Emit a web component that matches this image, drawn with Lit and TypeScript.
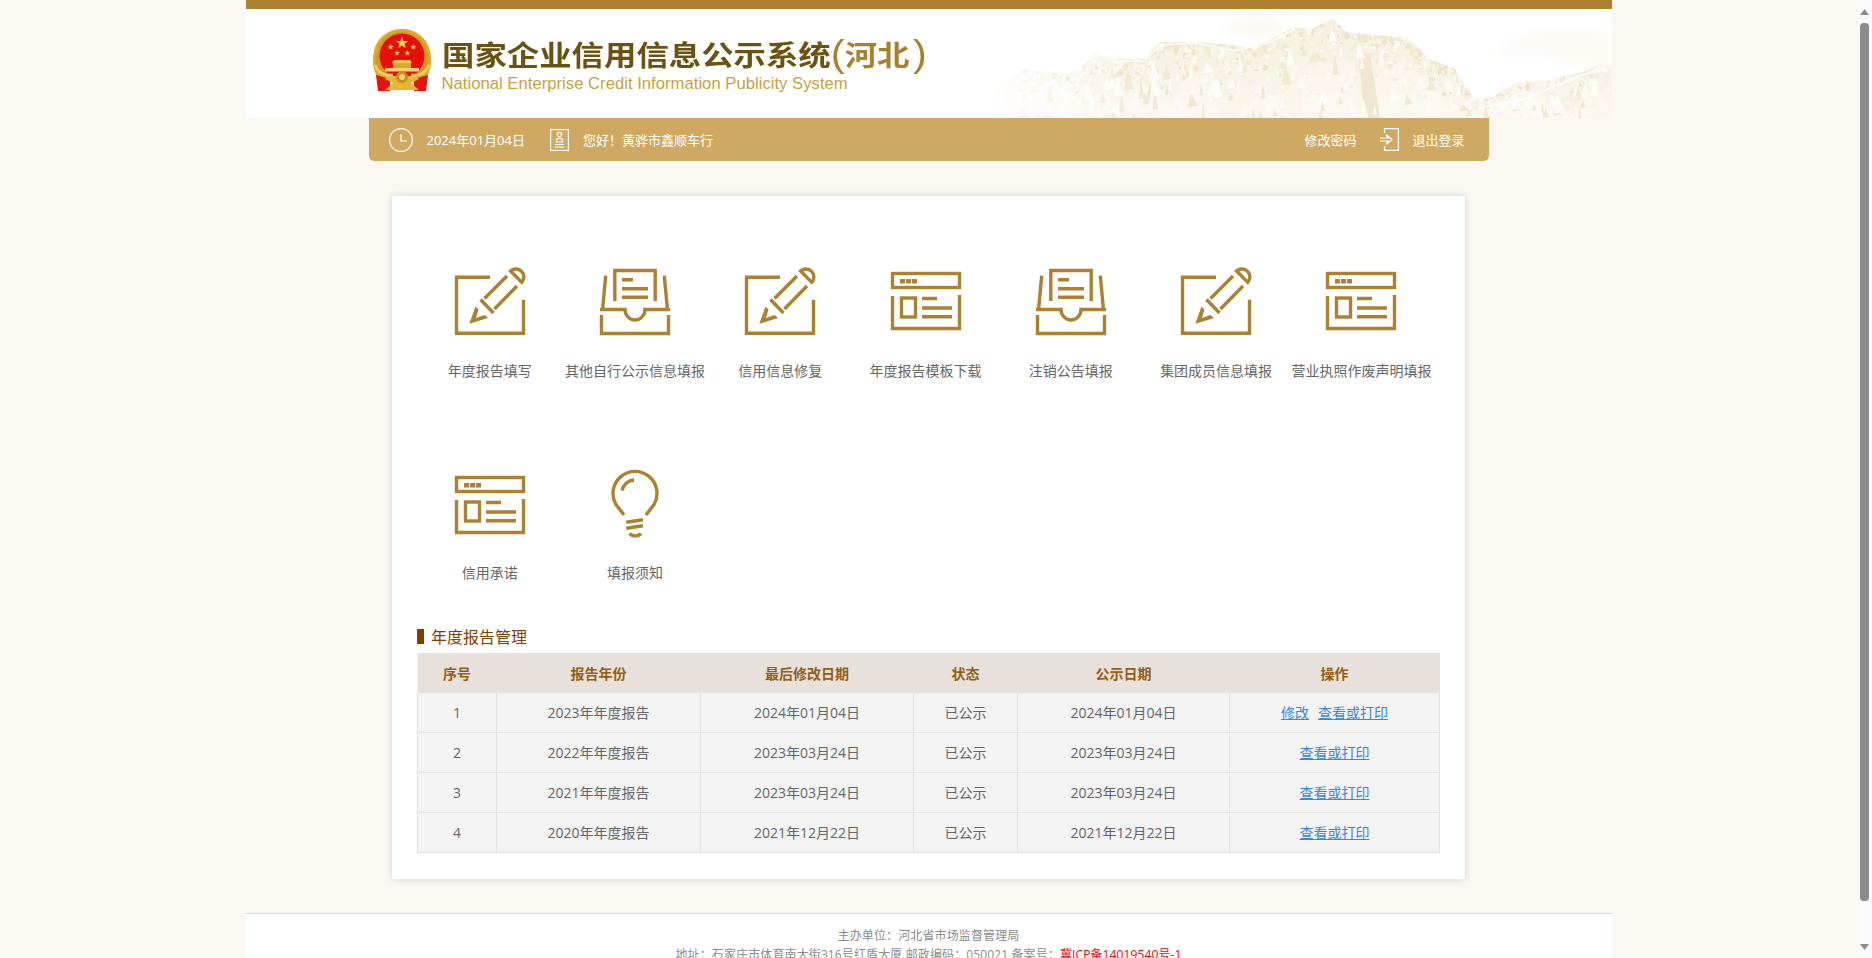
import { LitElement, html, css, svg } from "lit";
import { customElement } from "lit/decorators.js";

const editIcon = svg`
  <path d="M35 9.2H1.5V65.2H68.5V31.7" />
  <path d="M29.5 30.5L52 8M39.5 41L62 18" />
  <path d="M55.6 3L66.8 14.4A8 8 0 0 0 55.6 3Z" />
  <path d="M25.5 31.5L38.5 45" />
  <path class="solid" d="M14.3 55.7L20.5 38.5L23.5 41.5L21 50L29.5 47L33 50Z" />`;

const trayIcon = svg`
  <path d="M14.8 33V2.5H55.2V33" />
  <path d="M22 11.7H33M22 20.7H48M22 29.3H48" />
  <path d="M5.7 7.7L2.7 40M64.3 7.7L67.3 40" />
  <path d="M0 41.5H25A10 10.5 0 0 0 45 41.5H70" />
  <path d="M1.5 47V65.5H68.5V47" />`;

const windowIcon = svg`
  <rect x="1.5" y="5.5" width="67" height="14" />
  <path class="solid" d="M9 11h5v4.5H9zM15 11h5v4.5h-5zM21 11h5v4.5h-5z" />
  <path d="M1.5 28V60.5H68.5V27" />
  <rect x="10.5" y="30" width="14" height="19" />
  <path d="M31 30.5H46M31 40H61M31 48.7H61" />`;

const windowIconLow = svg`<g transform="translate(0 2)">${windowIcon}</g>`;

const bulbIcon = svg`
  <path d="M24 45L16 34.5A22 22 0 1 1 54 34.5L46 45" />
  <path d="M22 20.5A13 13 0 0 1 34 10" />
  <path d="M26.3 52.3L43 49.7M26.3 58.3L43 55.7" />
  <path d="M29.5 63.5A6.5 4.5 0 0 0 41 63.5" />`;

const items: [string, any][] = [
  ["年度报告填写", editIcon],
  ["其他自行公示信息填报", trayIcon],
  ["信用信息修复", editIcon],
  ["年度报告模板下载", windowIcon],
  ["注销公告填报", trayIcon],
  ["集团成员信息填报", editIcon],
  ["营业执照作废声明填报", windowIcon],
  ["信用承诺", windowIconLow],
  ["填报须知", bulbIcon],
];

const rows = [
  ["1", "2023年年度报告", "2024年01月04日", "已公示", "2024年01月04日", true],
  ["2", "2022年年度报告", "2023年03月24日", "已公示", "2023年03月24日", false],
  ["3", "2021年年度报告", "2023年03月24日", "已公示", "2023年03月24日", false],
  ["4", "2020年年度报告", "2021年12月22日", "已公示", "2021年12月22日", false],
];

function star(cx: number, cy: number, r: number) {
  const pts: string[] = [];
  for (let i = 0; i < 10; i++) {
    const rad = i % 2 ? r * 0.4 : r;
    const a = -Math.PI / 2 + (i * Math.PI) / 5;
    pts.push(`${(cx + rad * Math.cos(a)).toFixed(2)},${(cy + rad * Math.sin(a)).toFixed(2)}`);
  }
  return svg`<polygon points=${pts.join(" ")} fill="#f7d44c" />`;
}

const emblem = svg`
  <svg class="emblem" viewBox="0 0 58 62" width="58" height="62">
    <path d="M6 50C-1 42-1 30 1 22C4 8 16 0 29 0C42 0 54 8 57 22C59 30 59 42 52 50Z" fill="#e0a92c" />
    <path d="M7 46C2 38 2 28 4 22C7 10 17 3 29 3C41 3 51 10 54 22C56 28 56 38 51 46Z" fill="#c98d1d" opacity=".55" />
    <circle cx="29" cy="27" r="22.5" fill="#e60f0b" />
    ${star(29, 14, 6.5)}
    ${star(17.7, 18, 3.2)}
    ${star(40.3, 18, 3.2)}
    ${star(24, 24, 3)}
    ${star(34.3, 24, 3)}
    <path d="M21 31H37L39 34H19Z" fill="#f4cc54" />
    <path d="M20 34H38V39H20Z" fill="#dba62f" />
    <path d="M12 39H46V42.5H12Z" fill="#f2d274" />
    <path d="M3 46L17 50V62H5Z" fill="#e5140e" />
    <path d="M55 46L41 50V62H53Z" fill="#e5140e" />
    <path d="M15 47H43L46 50L38 54L46 61H12L20 54L12 50Z" fill="#e8b537" />
    <circle cx="29" cy="48" r="6" fill="#c78f1f" />
    <circle cx="29" cy="48" r="3" fill="#f3d36f" />
    <path d="M2 36C5 44 12 47 20 46M56 36C53 44 46 47 38 46" fill="none" stroke="#f0cb5e" stroke-width="3" />
  </svg>`;

// Deterministic pseudo-random source for the rock texture of the mountain art.
function rng(seed: number) {
  let s = seed;
  return () => {
    s = (s * 16807) % 2147483647;
    return (s - 1) / 2147483646;
  };
}

// Ridge line in the local coordinates of the art (627 x 109, bottom at 109).
const ridge: [number, number][] = [
  [0, 92], [25, 68], [40, 60], [80, 65], [95, 60], [110, 44], [130, 50], [160, 50], [175, 33], [210, 33],
  [240, 35], [270, 40], [285, 30], [310, 18], [325, 20], [348, 10], [362, 23], [400, 27], [420, 28], [430, 36],
  [445, 50], [470, 60], [490, 90], [508, 88], [530, 73], [560, 72], [600, 62], [615, 55], [627, 58], [627, 109], [0, 109],
];

function ridgeY(x: number) {
  for (let i = 0; i < ridge.length - 3; i++) {
    const [x0, y0] = ridge[i];
    const [x1, y1] = ridge[i + 1];
    if (x >= x0 && x <= x1) return y0 + ((y1 - y0) * (x - x0)) / (x1 - x0 || 1);
  }
  return 60;
}

const faces = [
  "0,110 30,85 80,70 100,110",
  "127,110 150,75 170,70 195,110",
  "190,110 195,75 215,65 240,110",
  "250,110 275,85 300,85 295,110",
  "315,110 320,60 365,50 375,110",
  "385,110 395,65 420,50 450,80 490,110",
  "490,110 510,88 555,80 570,110",
  "590,110 610,70 625,100",
];

function mountainArt() {
  const r = rng(20240104);
  const blotches = [];
  for (let i = 0; i < 1100; i++) {
    const x = 4 + r() * 622;
    const top = ridgeY(x);
    const depth = r() * r() * (109 - top);
    const y = top + depth;
    const inCore = x > 130 && x < 470;
    const darkChance = Math.exp(-depth / 22) * (inCore ? 0.8 : 0.2);
    const dark = r() < darkChance;
    const fill = dark ? (r() > 0.5 ? "#efe3c8" : "#f3ead6") : r() > 0.5 ? "#fcf9f2" : "#f7f1e3";
    blotches.push(
      svg`<ellipse cx=${x.toFixed(1)} cy=${y.toFixed(1)} rx=${(0.8 + r() * 2.2).toFixed(1)} ry=${(0.8 + r() * 3).toFixed(1)} fill=${fill} />`
    );
  }
  const facets = [];
  for (let i = 0; i < 170; i++) {
    const x = 20 + r() * 600;
    const top = ridgeY(x);
    const y = top + 8 + r() * (101 - top);
    const w = 2 + r() * 5;
    const h = 5 + r() * 16;
    facets.push(
      svg`<path d="M${x.toFixed(1)} ${y.toFixed(1)}l${w.toFixed(1)} ${h.toFixed(1)}l${(-w * 1.6).toFixed(1)} 1Z" fill=${r() > 0.4 ? "#fdfbf6" : "#f2e9d5"} />`
    );
  }
  const pts = ridge.map((p) => p.join(",")).join(" ");
  return svg`
    <svg class="mountain" viewBox="0 0 627 109" width="627" height="109">
      <defs>
        <linearGradient id="fade" x1="0" x2="0" y1="0" y2="1">
          <stop offset="0" stop-color="#f6efdf" />
          <stop offset="1" stop-color="#fbf7ee" />
        </linearGradient>
        <linearGradient id="edge" x1="0" x2="1" y1="0" y2="0">
          <stop offset="0" stop-color="#fff" stop-opacity="1" />
          <stop offset=".1" stop-color="#fff" stop-opacity=".5" />
          <stop offset=".24" stop-color="#fff" stop-opacity="0" />
        </linearGradient>
        <clipPath id="ridge"><polygon points=${pts} /></clipPath>
        <filter id="soft" x="-5%" y="-5%" width="110%" height="110%"><feGaussianBlur stdDeviation=".7" /></filter>
        <filter id="mist" x="-20%" y="-40%" width="140%" height="180%"><feGaussianBlur stdDeviation="6" /></filter>
      </defs>
      <g filter="url(#mist)">
        <path d="M232 18L275 6L312 18L270 30Z" fill="#fbf8f1" />
        <path d="M505 42L560 20L627 22V60L560 48Z" fill="#fcfaf4" />
      </g>
      <g filter="url(#soft)">
        <g clip-path="url(#ridge)">
          <polygon points=${pts} fill="url(#fade)" />
          ${blotches}
          ${faces.map((f) => svg`<polygon points=${f} fill="#fdfbf5" opacity=".45" />`)}
          <polygon points="373,42 385,45 395,110 380,110" fill="#f1e6cf" />
          ${facets}
        </g>
      </g>
      <path d="M110 46L130 52H160L175 36L210 34L250 42L285 33L310 20" fill="none" stroke="#fcfaf4" stroke-width="2" />
      <path d="M493 99L540 90L565 79L600 65L622 59" fill="none" stroke="#fdfbf7" stroke-width="2" />
      <rect width="627" height="109" fill="url(#edge)" />
    </svg>`;
}

@customElement("app-root")
export class AppRoot extends LitElement {
  static styles = css`
    :host {
      display: flex;
      height: 958px;
      overflow: hidden;
      background: #fbf8f1;
      font-family: "Open Sans", "Noto Sans CJK SC", sans-serif;
      font-size: 14px;
      color: #666;
    }
    .page {
      flex: 1;
      min-width: 0;
      height: 958px;
      overflow: hidden;
      display: flex;
      flex-direction: column;
      align-items: center;
    }
    .head {
      position: relative;
      flex: none;
      width: 1366px;
      height: 118px;
      box-sizing: border-box;
      border-top: 9px solid #ab802e;
      background: #fff;
      display: flex;
      align-items: flex-start;
      padding: 20px 0 0 127px;
      gap: 11px;
    }
    .mountain {
      position: absolute;
      right: 0;
      top: 0;
      display: block;
    }
    .emblem {
      flex: none;
      display: block;
      position: relative;
    }
    .brand {
      position: relative;
      white-space: nowrap;
      padding-top: 7px;
    }
    .title {
      font-family: "Noto Sans CJK SC", sans-serif;
      font-size: 28px;
      line-height: 36px;
      height: 36px;
      font-weight: 700;
      color: #6b5211;
      transform: scaleX(1.157);
      transform-origin: left center;
    }
    .prov {
      color: #a8812f;
    }
    .paren {
      font-family: "Liberation Sans", sans-serif;
      font-weight: 400;
      font-size: 36px;
      line-height: 36px;
    }
    .paren.end {
      margin-left: 3px;
    }
    .sub {
      font-family: "Liberation Sans", sans-serif;
      font-size: 16.7px;
      line-height: 18px;
      margin-top: 3px;
      color: #c9a13f;
    }
    .nav {
      flex: none;
      width: 1120px;
      height: 43px;
      box-sizing: border-box;
      background: #cfa962;
      border-radius: 0 0 5px 5px;
      display: flex;
      align-items: center;
      padding: 0 24px 0 20px;
      color: #fff;
      font-size: 13px;
      white-space: nowrap;
    }
    .nav svg {
      flex: none;
      display: block;
      fill: none;
      stroke: #fff;
      stroke-width: 1.2;
    }
    .date {
      margin-left: 14px;
    }
    .user {
      margin-left: 14px;
    }
    .person {
      margin-left: 25px;
    }
    .spacer {
      flex: 1;
    }
    .logout {
      margin: 0 13px 0 24px;
    }
    .card {
      flex: none;
      width: 1073px;
      box-sizing: border-box;
      margin-top: 35px;
      padding: 72px 25px 26px;
      background: #fff;
      box-shadow: 0 0 7px rgba(0, 0, 0, 0.16);
    }
    .grid {
      display: grid;
      grid-template-columns: repeat(7, 145.3px);
      row-gap: 89px;
    }
    .item {
      display: flex;
      flex-direction: column;
      align-items: center;
      white-space: nowrap;
    }
    .item svg {
      display: block;
      overflow: visible;
      fill: none;
      stroke: #ac812f;
      stroke-width: 3.4;
    }
    .item svg .solid {
      fill: #ac812f;
      stroke: none;
    }
    .label {
      margin-top: 23px;
      line-height: 20px;
      color: #666;
    }
    .section {
      display: flex;
      align-items: center;
      margin-top: 41px;
      height: 24px;
      color: #7f4000;
      font-size: 16px;
    }
    .section::before {
      content: "";
      width: 7px;
      height: 15px;
      margin-right: 7px;
      background: #7f4000;
    }
    table {
      width: 1023px;
      margin-top: 5px;
      border-collapse: collapse;
      table-layout: fixed;
      text-align: center;
      background: #f3f3f3;
    }
    th {
      height: 39px;
      padding: 0;
      background: #e8e1db;
      color: #945d12;
      font-weight: 700;
      font-size: 14px;
    }
    td {
      height: 38px;
      padding: 0 0 1px;
      border: 1px solid #e2e2e2;
      color: #666;
      white-space: nowrap;
    }
    .c1 { width: 79px; }
    .c2 { width: 204px; }
    .c3 { width: 213px; }
    .c4 { width: 104px; }
    .c5 { width: 212px; }
    a {
      color: #3a86d8;
      text-decoration: underline;
    }
    a + a {
      margin-left: 9px;
    }
    .foot {
      flex: none;
      width: 1366px;
      box-sizing: border-box;
      margin-top: 34px;
      padding: 12px 0 10px;
      background: #fff;
      border-top: 1px solid #d8d5cd;
      text-align: center;
      font-size: 12px;
      line-height: 19px;
      color: #8c8c8c;
      letter-spacing: 0.12px;
    }
    .icp {
      color: #f00;
    }
    .scroll {
      flex: none;
      width: 15px;
      height: 958px;
      background: #fafafa;
      display: flex;
      flex-direction: column;
      align-items: center;
      box-sizing: border-box;
      padding: 9px 0 8px;
    }
    .scroll svg {
      display: block;
      flex: none;
      fill: #8b8b8b;
    }
    .thumb {
      flex: none;
      width: 9px;
      height: 878px;
      margin: 8px 0 auto;
      border-radius: 4px;
      background: #8b8b8b;
    }
  `;

  render() {
    return html`
      <div class="page">
        <header class="head">
          ${mountainArt()}
          ${emblem}
          <div class="brand">
            <div class="title">国家企业信用信息公示系统<span class="prov"><span class="paren">(</span>河北<span class="paren end">)</span></span></div>
            <div class="sub">National Enterprise Credit Information Publicity System</div>
          </div>
        </header>
        <nav class="nav">
          <svg width="24" height="24" viewBox="0 0 24 24">
            <circle cx="12" cy="12" r="11.4" />
            <path d="M12 6V13H18" />
          </svg>
          <span class="date">2024年01月04日</span>
          <svg class="person" width="19" height="22" viewBox="0 0 19 22">
            <rect x=".6" y=".6" width="17.8" height="20.8" />
            <circle cx="9.5" cy="5.5" r="2.2" />
            <path d="M6.5 13V10.5C6.5 9 12.5 9 12.5 10.5V13ZM5 15.5H14M5 18H14" />
          </svg>
          <span class="user">您好！黄骅市鑫顺车行</span>
          <span class="spacer"></span>
          <span>修改密码</span>
          <svg class="logout" width="19" height="23" viewBox="0 0 19 23">
            <path d="M4.5 5V.6H18.4V22.4H4.5V18" />
            <path d="M0 10H8L6 6.5L12 11.5L6 16.5L8 13H0" />
          </svg>
          <span>退出登录</span>
        </nav>
        <main class="card">
          <div class="grid">
            ${items.map(
              ([label, icon]) => html`
                <div class="item">
                  <svg width="70" height="70" viewBox="0 0 70 70">${icon}</svg>
                  <span class="label">${label}</span>
                </div>
              `
            )}
          </div>
          <div class="section">年度报告管理</div>
          <table>
            <colgroup>
              <col class="c1" /><col class="c2" /><col class="c3" /><col class="c4" /><col class="c5" /><col />
            </colgroup>
            <thead>
              <tr><th>序号</th><th>报告年份</th><th>最后修改日期</th><th>状态</th><th>公示日期</th><th>操作</th></tr>
            </thead>
            <tbody>
              ${rows.map(
                (r) => html`
                  <tr>
                    <td>${r[0]}</td><td>${r[1]}</td><td>${r[2]}</td><td>${r[3]}</td><td>${r[4]}</td>
                    <td>${r[5] ? html`<a href="#">修改</a>` : ""}<a href="#">查看或打印</a></td>
                  </tr>
                `
              )}
            </tbody>
          </table>
        </main>
        <footer class="foot">
          <div>主办单位：河北省市场监督管理局</div>
          <div>地址：石家庄市体育南大街316号红盾大厦 邮政编码：050021 备案号：<span class="icp">冀ICP备14019540号-1</span></div>
        </footer>
      </div>
      <div class="scroll">
        <svg width="9" height="6" viewBox="0 0 9 6"><path d="M4.5 0L9 6H0Z" /></svg>
        <div class="thumb"></div>
        <svg width="9" height="6" viewBox="0 0 9 6"><path d="M0 0H9L4.5 6Z" /></svg>
      </div>
    `;
  }
}
